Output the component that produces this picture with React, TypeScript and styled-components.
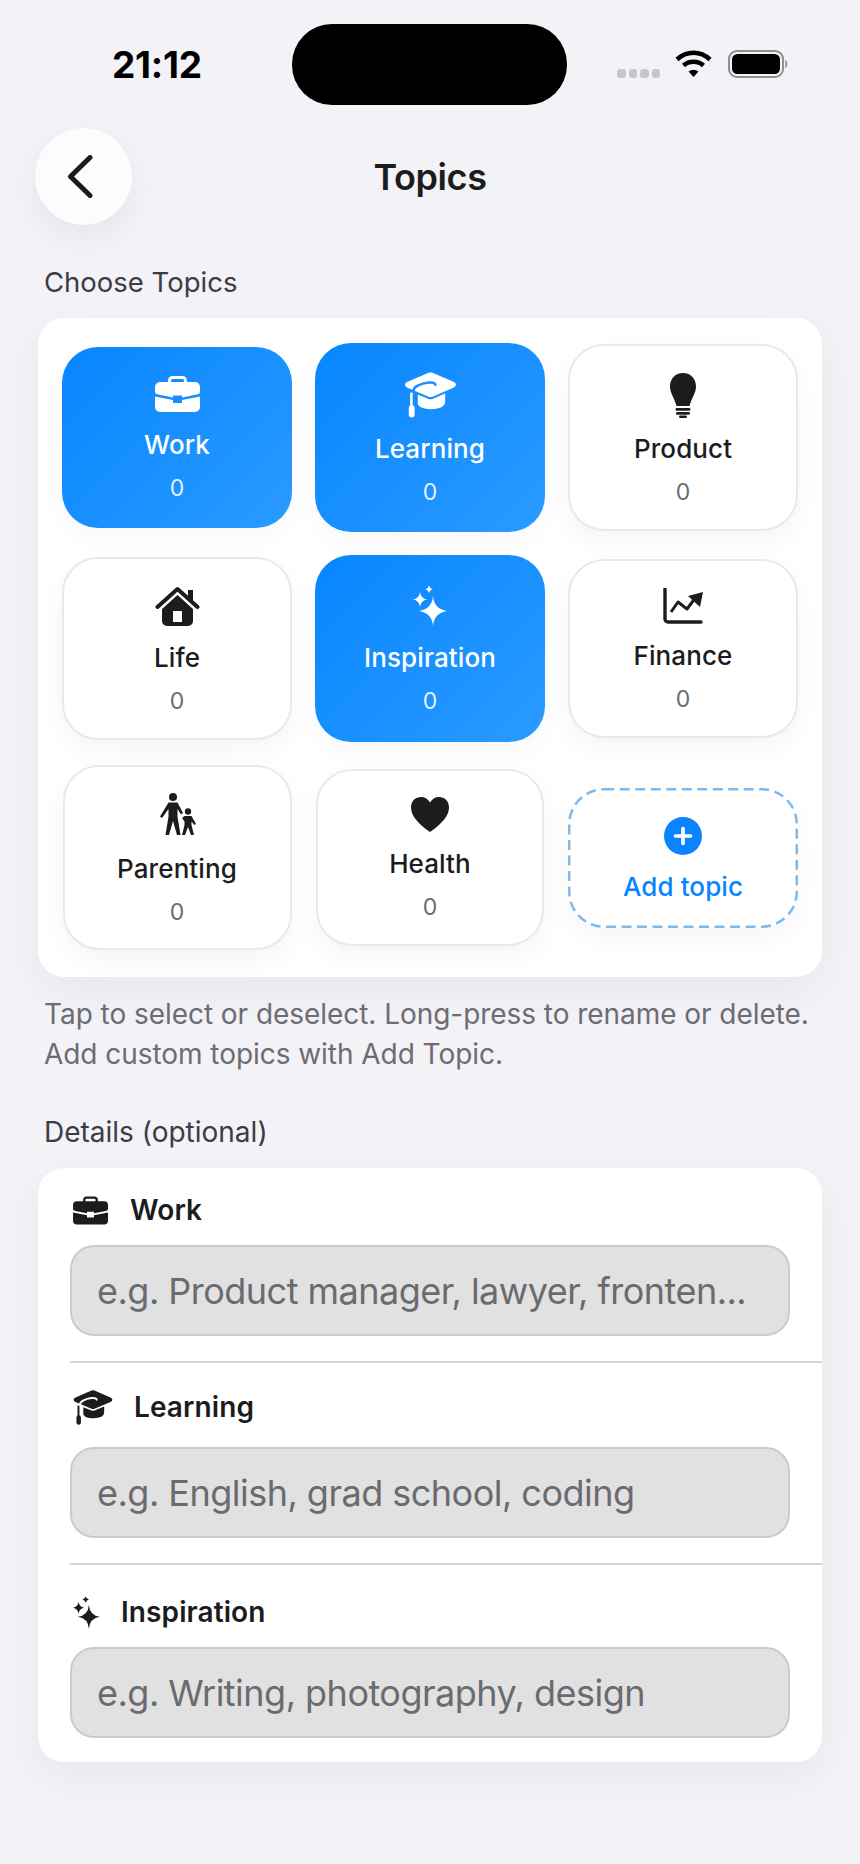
import React from "react";
import styled, { createGlobalStyle } from "styled-components";

const Global = createGlobalStyle`
  html, body { margin: 0; padding: 0; background: #f2f2f7; }
  * { box-sizing: border-box; }
  body { font-family: Inter, "Noto Sans", "Liberation Sans", sans-serif; color: #1c1c1e; }
`;

const Page = styled.div`
  width: 860px;
  height: 1864px;
  background: #f2f2f7;
  overflow: hidden;
`;

const StatusBar = styled.div`
  height: 128px;
  display: grid;
  grid-template-columns: 292px 275px 1fr;
  padding-top: 24px;
`;
const Time = styled.div`
  margin: 23px 0 0 112px;
  font-size: 37px;
  line-height: 36px;
  font-weight: 700;
  letter-spacing: -0.2px;
  color: #000;
`;
const Island = styled.div`
  height: 81px;
  border-radius: 40px;
  background: #000;
`;
const StatusIcons = styled.div`
  display: flex;
  align-items: flex-start;
  margin: 26px 0 0 50px;
`;
const SignalDots = styled.div`
  display: flex;
  gap: 3px;
  margin-top: 19px;
  margin-right: 15px;
`;
const Dot = styled.span`
  width: 8.5px;
  height: 8.5px;
  border-radius: 3px;
  background: #c6c6c9;
`;

const Header = styled.div`
  display: grid;
  grid-template-columns: 97px 1fr 97px;
  align-items: center;
  margin: 0 35px;
  height: 97px;
`;
const BackButton = styled.div`
  width: 97px;
  height: 97px;
  border-radius: 50%;
  background: #fcfcfe;
  box-shadow: 0 12px 32px rgba(0, 0, 0, 0.06);
  display: flex;
  align-items: center;
  justify-content: center;
  padding-right: 7px;
`;
const Title = styled.div`
  text-align: center;
  font-size: 36px;
  line-height: 44px;
  font-weight: 600;
  letter-spacing: -0.4px;
  margin-top: 1px;
`;

const SectionLabel = styled.div<{ $top: number; $size: number }>`
  margin: ${(p) => p.$top}px 0 0 44px;
  font-size: ${(p) => p.$size}px;
  line-height: 36px;
  color: #3c3c43;
`;

const Card = styled.div`
  margin: 0 38px;
  width: 784px;
  background: #fff;
  border-radius: 26px;
  box-shadow: 0 14px 44px rgba(0, 0, 0, 0.05);
`;
const TopicCard = styled(Card)`
  margin-top: 18px;
  height: 659px;
  padding: 25px 25px 26px;
  display: grid;
  grid-template-columns: repeat(3, 228px);
  grid-template-rows: 189px 187px 185px;
  column-gap: 25px;
  row-gap: 23px;
  align-items: center;
  justify-items: center;
`;

const Tile = styled.div<{ $w: number; $h: number; $on?: boolean }>`
  width: ${(p) => p.$w}px;
  height: ${(p) => p.$h}px;
  border-radius: 36px;
  padding-top: 5px;
  display: flex;
  flex-direction: column;
  align-items: center;
  justify-content: center;
  background: ${(p) => (p.$on ? "linear-gradient(135deg, #0786ff, #2a9aff)" : "#fff")};
  border: ${(p) => (p.$on ? "none" : "2px solid #e9e9eb")};
  color: ${(p) => (p.$on ? "#fff" : "#1c1c1e")};
  box-shadow: ${(p) => (p.$on ? "0 10px 26px rgba(0,0,0,0.03)" : "0 10px 26px rgba(0,0,0,0.045)")};
`;
const AddTile = styled.div`
  position: relative;
  width: 230px;
  height: 140px;
  border-radius: 36px;
  background: #fff;
  padding-top: 5px;
  display: flex;
  flex-direction: column;
  align-items: center;
  justify-content: center;
  box-shadow: 0 10px 26px rgba(0, 0, 0, 0.04);
`;
const DashFrame = styled.svg`
  position: absolute;
  inset: 0;
`;
const IconSlot = styled.div<{ $h: number }>`
  height: ${(p) => p.$h}px;
  display: flex;
  align-items: center;
  justify-content: center;
`;
const TileLabel = styled.div<{ $mt: number }>`
  margin-top: ${(p) => p.$mt}px;
  font-size: 26px;
  line-height: 32px;
  font-weight: 500;
  letter-spacing: 0.1px;
`;
const TileCount = styled.div<{ $on?: boolean }>`
  margin-top: 11px;
  font-size: 23px;
  line-height: 32px;
  color: ${(p) => (p.$on ? "rgba(255,255,255,0.9)" : "#6b6b70")};
`;
const AddLabel = styled.div`
  margin-top: 16px;
  font-size: 26px;
  line-height: 32px;
  font-weight: 500;
  letter-spacing: 0.1px;
  color: #0a84ff;
`;

const Hint = styled.div`
  margin: 17px 0 0 44px;
  font-size: 28px;
  line-height: 40px;
  color: #6c6c72;
  letter-spacing: -0.05px;
  white-space: pre-line;
`;

const DetailCard = styled(Card)`
  margin-top: 18px;
  height: 594px;
  overflow: hidden;
`;
const DetailRow = styled.div<{ $top: number; $gap: number; $last?: boolean }>`
  margin-left: 32px;
  padding: ${(p) => p.$top}px 32px 25px 0;
  border-bottom: ${(p) => (p.$last ? "none" : "2px solid #d5d5d7")};
  & > div:first-child {
    margin-bottom: ${(p) => p.$gap}px;
  }
`;
const DetailHead = styled.div<{ $gap: number }>`
  display: flex;
  align-items: center;
  gap: ${(p) => p.$gap}px;
  height: 36px;
  padding-left: 3px;
  font-size: 28px;
  font-weight: 600;
  letter-spacing: 0.1px;
`;
const Field = styled.div`
  height: 91px;
  border-radius: 24px;
  background: #e1e1e1;
  border: 2px solid #cbcbcb;
  padding: 0 25px;
  display: flex;
  align-items: center;
  font-size: 36px;
  letter-spacing: -0.52px;
  color: #6b6b6f;
  white-space: nowrap;
  overflow: hidden;
`;

type IconProps = { w: number; h: number; cut?: string };

const Briefcase = ({ w, h }: IconProps) => (
  <svg width={w} height={h} viewBox="0 0 45 36" fill="currentColor">
    <path d="M14.5 7V4.5a3 3 0 0 1 3-3h10a3 3 0 0 1 3 3V7" fill="none" stroke="currentColor" strokeWidth="3" />
    <path d="M5 6h35a5 5 0 0 1 5 5v5q0 2-3 2.6L27 21.500V19.500H18V21.500L3 18.600Q0 18 0 16V11a5 5 0 0 1 5-5Z" />
    <path d="M0 20.500 18 24V27H27V24L45 20.500V31a5 5 0 0 1-5 5H5a5 5 0 0 1-5-5Z" />
  </svg>
);
const GradCap = ({ w, h, cut = "#fff" }: IconProps) => (
  <svg width={w} height={h} viewBox="0 0 52 47" fill="currentColor">
    <path d="M24 .8q2-.8 4 0L49.500 10q2.500 1.300 2.500 3t-2.500 3L28 25.200q-2 .8-4 0L2.500 16Q0 15 0 13t2.500-3Z" />
    <path d="M13 23 24 27.500q2 .8 4 0L41 22V30q0 8-14.500 8C19 38 14.500 36 13 33Z" />
    <path d="M31 13C30 9.500 20 10 12 14.500Q8.500 16.500 8.500 20V31" fill="none" stroke={cut} strokeWidth="2.600" strokeLinecap="round" />
    <rect x="5.200" y="21" width="2.600" height="14" fill="currentColor" />
    <rect x="3.800" y="34" width="6" height="12.500" rx="3" />
  </svg>
);
const Bulb = ({ w, h }: IconProps) => (
  <svg width={w} height={h} viewBox="0 0 28 45" fill="currentColor">
    <path d="M14 0C22 0 27 6 27 13.500C27 20 22.500 25 20.500 33H7.500C5.500 25 1 20 1 13.500C1 6 6 0 14 0Z" />
    <rect x="6.500" y="35" width="15" height="2.800" rx="1.400" />
    <rect x="7" y="39" width="14" height="2.800" rx="1.400" />
    <rect x="10" y="42.500" width="8" height="2.500" rx="1.200" />
  </svg>
);
const House = ({ w, h }: IconProps) => (
  <svg width={w} height={h} viewBox="0 0 45 40" fill="currentColor">
    <rect x="33" y="4" width="5" height="11" />
    <path d="M2.500 21 22.500 3 42.500 21" fill="none" stroke="currentColor" strokeWidth="4" strokeLinecap="round" strokeLinejoin="round" />
    <path fillRule="evenodd" d="M7 23 22.500 9 38 23V35a5 5 0 0 1-5 5H12a5 5 0 0 1-5-5ZM18 25V36H27V25Z" />
  </svg>
);
const Chart = ({ w, h }: IconProps) => (
  <svg width={w} height={h} viewBox="0 0 40 36" fill="currentColor">
    <path d="M2 1V31a3 3 0 0 0 3 3H38" fill="none" stroke="currentColor" strokeWidth="3.400" strokeLinecap="round" />
    <path d="M8 24 15 14 24 21 33 9" fill="none" stroke="currentColor" strokeWidth="3" strokeLinejoin="round" />
    <path d="M25 8 40 4 37 19Z" />
  </svg>
);
const Sparkles = ({ w, h }: IconProps) => (
  <svg width={w} height={h} viewBox="0 0 34 41" fill="currentColor">
    <path d="M20 11Q21 24 34 26 21 28 20 41 19 28 6 26 19 24 20 11Z" />
    <path d="M7 7Q7.800 13.500 14 14.500 7.800 15.500 7 22 6.200 15.500 0 14.500 6.200 13.500 7 7Z" />
    <path d="M16 0Q16.400 3.400 20 4.200 16.400 5 16 8.500 15.600 5 12 4.200 15.600 3.400 16 0Z" />
  </svg>
);
const Family = ({ w, h }: IconProps) => (
  <svg width={w} height={h} viewBox="0 0 37 42" fill="currentColor">
    <circle cx="14" cy="4" r="4" />
    <path d="M9.500 9.500H18.500L24 20 22 21.500 18.500 16V23.500L21.500 42H18L14 28 10 42H6.500L9.500 23.500V16L3 25 1 23.500Z" />
    <circle cx="29" cy="18.500" r="3.200" />
    <path d="M25.500 23H32.500L37 31 35.300 32 32.500 28.500V32L35 42H32L29 34 26 42H23L25.500 32V28.500L23 25Z" />
  </svg>
);
const Heart = ({ w, h }: IconProps) => (
  <svg width={w} height={h} viewBox="0 0 38 35" fill="currentColor">
    <path d="M19 35C6 26 0 18 0 10.500C0 4 4.500 0 10 0C14 0 17 2 19 5.500C21 2 24 0 28 0C33.500 0 38 4 38 10.500C38 18 32 26 19 35Z" />
  </svg>
);
const PlusCircle = () => (
  <svg width="38" height="38" viewBox="0 0 38 38">
    <circle cx="19" cy="19" r="19" fill="#0a84ff" />
    <path d="M19 11.500V26.500M11.500 19H26.500" stroke="#fff" strokeWidth="3.600" strokeLinecap="round" />
  </svg>
);
const Chevron = () => (
  <svg width="26" height="43" viewBox="0 0 26 43" fill="none">
    <path d="M23 2.500 3.500 21.500 23 40.500" stroke="#1c1c1e" strokeWidth="5" strokeLinecap="round" strokeLinejoin="round" />
  </svg>
);
const Wifi = () => (
  <svg width="37" height="27" viewBox="0 0 37 27" fill="none" stroke="#000" strokeWidth="4.500">
    <path d="M2 9.500C11.500 .5 25.500 .5 35 9.500" />
    <path d="M8.500 15.500C14 10.500 23 10.500 28.500 15.500" />
    <path d="M18.500 27 13.500 21.500Q18.500 18 23.500 21.500Z" fill="#000" stroke="none" />
  </svg>
);
const Battery = () => (
  <svg width="60" height="28" viewBox="0 0 60 28" style={{ marginLeft: 16 }}>
    <rect x="1" y="1" width="54" height="26" rx="8" fill="none" stroke="#8e8e90" strokeWidth="2" />
    <rect x="4" y="4" width="48" height="20" rx="5.500" fill="#000" />
    <path d="M57 10C59 11 59.500 12.500 59.500 14S59 17 57 18Z" fill="#a0a0a2" />
  </svg>
);

const topics = [
  { name: "Work", w: 230, h: 181, on: true, iconH: 36, mt: 17, icon: <Briefcase w={45} h={36} /> },
  { name: "Learning", w: 230, h: 189, on: true, iconH: 46, mt: 15, icon: <GradCap w={51} h={46} cut="#1a8fff" /> },
  { name: "Product", w: 230, h: 187, iconH: 45, mt: 15, icon: <Bulb w={28} h={45} /> },
  { name: "Life", w: 230, h: 183, iconH: 40, mt: 16, icon: <House w={45} h={40} /> },
  { name: "Inspiration", w: 230, h: 187, on: true, iconH: 41, mt: 16, icon: <Sparkles w={34} h={41} /> },
  { name: "Finance", w: 230, h: 179, iconH: 36, mt: 16, icon: <Chart w={40} h={36} /> },
  { name: "Parenting", w: 229, h: 185, iconH: 42, mt: 18, icon: <Family w={37} h={42} /> },
  { name: "Health", w: 228, h: 177, iconH: 35, mt: 16, icon: <Heart w={38} h={35} /> },
];

export default function App() {
  return (
    <Page>
      <Global />
      <StatusBar>
        <Time>21:12</Time>
        <Island />
        <StatusIcons>
          <SignalDots>
            <Dot />
            <Dot />
            <Dot />
            <Dot />
          </SignalDots>
          <Wifi />
          <Battery />
        </StatusIcons>
      </StatusBar>
      <Header>
        <BackButton>
          <Chevron />
        </BackButton>
        <Title>Topics</Title>
      </Header>
      <SectionLabel $top={39} $size={27.5}>Choose Topics</SectionLabel>
      <TopicCard>
        {topics.map((t) => (
          <Tile key={t.name} $w={t.w} $h={t.h} $on={t.on}>
            <IconSlot $h={t.iconH}>{t.icon}</IconSlot>
            <TileLabel $mt={t.mt}>{t.name}</TileLabel>
            <TileCount $on={t.on}>0</TileCount>
          </Tile>
        ))}
        <AddTile>
          <DashFrame width="230" height="140" viewBox="0 0 230 140" fill="none">
            <rect x="1.25" y="1.25" width="227.5" height="137.5" rx="35" stroke="#7cb9ee" strokeWidth="2.5" strokeDasharray="10 5.5" />
          </DashFrame>
          <PlusCircle />
          <AddLabel>Add topic</AddLabel>
        </AddTile>
      </TopicCard>
      <Hint>{"Tap to select or deselect. Long-press to rename or delete.\nAdd custom topics with Add Topic."}</Hint>
      <SectionLabel $top={40} $size={28}>Details (optional)</SectionLabel>
      <DetailCard>
        <DetailRow $top={24} $gap={17}>
          <DetailHead $gap={22}>
            <Briefcase w={35} h={29} />
            Work
          </DetailHead>
          <Field>e.g. Product manager, lawyer, fronten...</Field>
        </DetailRow>
        <DetailRow $top={26} $gap={22}>
          <DetailHead $gap={21}>
            <GradCap w={40} h={35} />
            Learning
          </DetailHead>
          <Field>e.g. English, grad school, coding</Field>
        </DetailRow>
        <DetailRow $top={29} $gap={17} $last>
          <DetailHead $gap={21}>
            <Sparkles w={27} h={33} />
            Inspiration
          </DetailHead>
          <Field>e.g. Writing, photography, design</Field>
        </DetailRow>
      </DetailCard>
    </Page>
  );
}
